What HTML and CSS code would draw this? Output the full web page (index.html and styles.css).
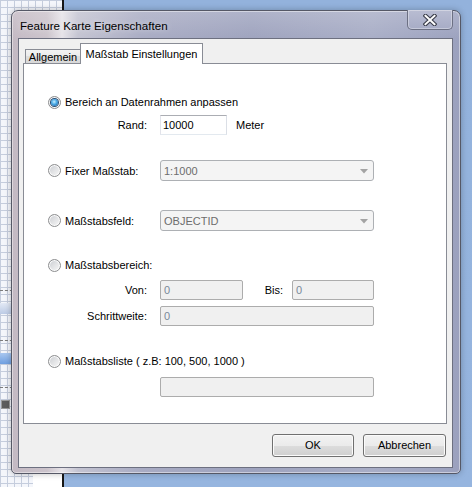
FILE: index.html
```html
<!DOCTYPE html>
<html lang="de">
<head>
<meta charset="utf-8">
<title>Feature Karte Eigenschaften</title>
<link rel="stylesheet" href="styles.css">
</head>
<body>
<div class="desktop">
  <div class="bgapp">
    <div class="sp sp-a"></div>
    <div class="dash"></div>
    <div class="sp sp-b"></div>
    <div class="band band-light"></div>
    <div class="sp sp-c"></div>
    <div class="dash"></div>
    <div class="sp sp-b"></div>
    <div class="band band-blue"></div>
    <div class="sp sp-d"></div>
    <div class="dash"></div>
    <div class="sp sp-b"></div>
    <div class="icon-row"><span class="mini-icon"></span></div>
    <div class="sp sp-fill"></div>
    <div class="bottom-row"><span class="grid-part"></span><span class="white-part"></span></div>
  </div>
  <div class="blue"></div>

  <div class="window">
    <div class="titlebar">
      <span class="title">Feature Karte Eigenschaften</span>
      <div class="close">
        <svg width="14" height="12" viewBox="0 0 14 12">
          <path d="M2.5 1.8 L11.5 10.2 M11.5 1.8 L2.5 10.2" stroke="#3c3f4c" stroke-width="4.2" stroke-linecap="square" fill="none"/>
          <path d="M2.5 1.8 L11.5 10.2 M11.5 1.8 L2.5 10.2" stroke="#ffffff" stroke-width="2" stroke-linecap="square" fill="none"/>
        </svg>
      </div>
    </div>
    <div class="client">
      <div class="tabs">
        <div class="tab">Allgemein</div>
        <div class="tab active">Maßstab Einstellungen</div>
      </div>
      <div class="panel">
        <div class="row">
          <span class="radio checked"></span><span class="opt-text">Bereich an Datenrahmen anpassen</span>
        </div>
        <div class="row r-rand">
          <span class="lbl">Rand:</span>
          <span class="tb w-rand">10000</span>
          <span class="unit">Meter</span>
        </div>
        <div class="row tall r-fix">
          <span class="opt"><span class="radio"></span><span class="opt-text">Fixer Maßstab:</span></span>
          <span class="cb"><span class="cb-text">1:1000</span><svg class="arrow" width="8" height="5" viewBox="0 0 8 5"><path d="M0 0 H8 L4 4.5 Z" fill="#a3a3a3"/></svg></span>
        </div>
        <div class="row tall r-feld">
          <span class="opt"><span class="radio"></span><span class="opt-text">Maßstabsfeld:</span></span>
          <span class="cb"><span class="cb-text">OBJECTID</span><svg class="arrow" width="8" height="5" viewBox="0 0 8 5"><path d="M0 0 H8 L4 4.5 Z" fill="#a3a3a3"/></svg></span>
        </div>
        <div class="row r-bereich">
          <span class="radio"></span><span class="opt-text">Maßstabsbereich:</span>
        </div>
        <div class="row r-von">
          <span class="lbl">Von:</span>
          <span class="tb dis w-von">0</span>
          <span class="bis">Bis:</span>
          <span class="tb dis w-bis">0</span>
        </div>
        <div class="row r-schritt">
          <span class="lbl">Schrittweite:</span>
          <span class="tb dis w-full">0</span>
        </div>
        <div class="row r-liste">
          <span class="radio"></span><span class="opt-text">Maßstabsliste ( z.B: 100, 500, 1000 )</span>
        </div>
        <div class="row r-last">
          <span class="tb dis w-full"></span>
        </div>
      </div>
      <div class="buttons">
        <div class="btn btn-ok">OK</div>
        <div class="btn btn-cancel">Abbrechen</div>
      </div>
    </div>
  </div>
</div>
</body>
</html>
```

FILE: styles.css
```css
* { box-sizing: border-box; }
html, body { margin: 0; padding: 0; }
body {
  width: 472px;
  height: 487px;
  overflow: hidden;
  font-family: "Liberation Sans", Arial, sans-serif;
  font-size: 11px;
  color: #000;
}

.desktop {
  position: relative;
  width: 472px;
  height: 487px;
  display: flex;
}

/* background application (grid) */
.bgapp {
  width: 64px;
  height: 100%;
  border-right: 2px solid #161616;
  background-color: #f4f6fb;
  background-image:
    linear-gradient(90deg, #c5cddd 1px, transparent 1px),
    linear-gradient(#c5cddd 1px, transparent 1px);
  background-size: 7px 7px;
  display: flex;
  flex-direction: column;
}
.sp { flex: none; }
.sp-a { height: 290px; }
.sp-b { height: 12px; }
.sp-c { height: 26px; }
.sp-d { height: 23px; }
.sp-fill { flex: 1; }
.dash { height: 1px; border-top: 1px dashed #7c7c7c; }
.band { height: 11px; }
.band-light { background: linear-gradient(#e3e9f5, #bccbe5); }
.band-blue { background: linear-gradient(#a9c7f0, #6f9fe0); }
.icon-row { height: 10px; display: flex; }
.mini-icon {
  width: 9px;
  height: 9px;
  margin-left: 1px;
  background: #5d5d5d;
  border: 1px solid #9a9a9a;
}
.bottom-row { height: 13px; display: flex; }
.grid-part { width: 33px; }
.white-part { flex: 1; background: #ffffff; }

.blue {
  flex: 1;
  background: linear-gradient(#93b2dc, #96b5df);
}

/* dialog window */
.window {
  position: absolute;
  left: 11px;
  top: 10px;
  width: 450px;
  height: 464px;
  border: 1px solid #555866;
  border-radius: 7px 7px 5px 5px;
  background:
    linear-gradient(rgba(255,255,255,0.18), rgba(255,255,255,0) 30px),
    linear-gradient(90deg, #c3b9c3 0px, #cbc3cb 35px, #e6e3e8 50px, #c3c3d1 66px, #a8abc3 130px, #9ea3be 240px, #a8adc6 360px, #9ba1be 450px);
  box-shadow: inset 0 0 0 1px rgba(255,255,255,0.45), 0 0 6px rgba(0,0,0,0.25);
  display: flex;
  flex-direction: column;
}

.titlebar {
  height: 27px;
  flex: none;
  display: flex;
  align-items: flex-start;
}
.title {
  padding: 7px 0 0 8px;
  line-height: 16px;
  font-size: 11.6px;
  color: #000;
  white-space: nowrap;
  text-shadow: 0 0 6px rgba(255,255,255,0.6);
}
.close {
  margin-left: auto;
  margin-right: 7px;
  margin-top: -1px;
  width: 46px;
  height: 20px;
  border: 1px solid #6c7083;
  border-top: none;
  border-radius: 0 0 5px 5px;
  background: linear-gradient(#b9bdd2, #a7acc6);
  box-shadow: inset 0 0 0 1px rgba(255,255,255,0.35);
  display: flex;
  align-items: center;
  justify-content: center;
  padding-top: 1px;
}

.client {
  margin: 0 7px 5px 6px;
  height: 430px;
  flex: none;
  border: 1px solid #6d7080;
  background: #f0f0f0;
  padding: 4px 5px 0 4px;
  display: flex;
  flex-direction: column;
}

/* tabs */
.tabs {
  position: relative;
  z-index: 1;
  height: 21px;
  margin-bottom: -1px;
  padding-left: 2px;
  display: flex;
  align-items: flex-end;
  flex: none;
}
.tab {
  height: 14px;
  margin-bottom: 1px;
  width: 56px;
  border: 1px solid #898c95;
  border-bottom: none;
  background: linear-gradient(#f3f3f3, #ebebeb 50%, #dedede 50%, #d8d8d8);
  line-height: 13px;
  text-align: center;
  padding-top: 1px;
  white-space: nowrap;
}
.tab.active {
  height: 21px;
  margin-bottom: 0;
  margin-left: -1px;
  width: 123px;
  background: #ffffff;
  line-height: 14px;
  padding-top: 3px;
}

.panel {
  height: 361px;
  flex: none;
  background: #ffffff;
  border: 1px solid #898c95;
  padding: 28px 0 0 24px;
}

.row {
  display: flex;
  align-items: center;
  height: 20px;
}
.row.tall { height: 21px; }
.r-rand { margin-top: 3px; }
.r-fix { margin-top: 25px; }
.r-feld { margin-top: 29px; }
.r-bereich { margin-top: 24px; }
.r-von { margin-top: 5px; }
.r-schritt { margin-top: 6px; }
.r-liste { margin-top: 25px; }
.r-last { margin-top: 6px; padding-left: 112px; }

.opt {
  width: 112px;
  display: flex;
  align-items: center;
  flex: none;
}
.opt-text { white-space: nowrap; }

.radio {
  width: 13px;
  height: 13px;
  flex: none;
  margin-right: 4px;
  border-radius: 50%;
  border: 1px solid #8d8e90;
  background: linear-gradient(135deg, #c9ccd1 0%, #e2e3e5 50%, #f8f8f8 100%);
  box-shadow: inset 0 0 0 1px #fbfbfb;
  display: flex;
  align-items: center;
  justify-content: center;
}
.radio.checked::after {
  content: "";
  width: 7px;
  height: 7px;
  border-radius: 50%;
  background: radial-gradient(circle at 45% 40%, #c9f1ff 0, #48a8e6 45%, #165591 100%);
  box-shadow: 0 0 0 1px #2d4f74;
}

.lbl {
  width: 99px;
  flex: none;
  text-align: right;
  margin-right: 13px;
  white-space: nowrap;
}
.bis {
  width: 49px;
  flex: none;
  text-align: right;
  padding-right: 9px;
}
.unit { margin-left: 9px; }

.tb {
  height: 20px;
  flex: none;
  border: 1px solid;
  border-color: #abadb3 #dbdfe6 #e3e9ef #e2e3ea;
  background: #ffffff;
  padding-left: 2px;
  line-height: 18px;
  color: #000;
}
.tb.dis {
  background: #f0f0f0;
  border: 1px solid #acacac;
  border-radius: 2px;
  color: #7a8899;
  padding-left: 3px;
}
.w-rand { width: 67px; }
.w-von { width: 83px; }
.w-bis { width: 82px; }
.w-full { width: 214px; }

.cb {
  width: 214px;
  height: 21px;
  flex: none;
  border: 1px solid #adb0b4;
  border-radius: 3px;
  background: #f4f4f4;
  color: #6d6d6d;
  display: flex;
  align-items: center;
  padding: 0 5px 0 3px;
}
.cb-text { flex: 1; }
.arrow { flex: none; margin-top: 1px; }

.buttons {
  margin-top: 10px;
  display: flex;
  justify-content: flex-end;
  gap: 9px;
  padding-right: 1px;
}
.btn {
  height: 23px;
  border: 1px solid #707070;
  border-radius: 3px;
  background: linear-gradient(#f2f2f2 0%, #ebebeb 50%, #dddddd 50%, #cfcfcf 100%);
  box-shadow: inset 0 0 0 1px #fbfbfb;
  text-align: center;
  line-height: 21px;
}
.btn-ok { width: 82px; }
.btn-cancel { width: 83px; }
```
